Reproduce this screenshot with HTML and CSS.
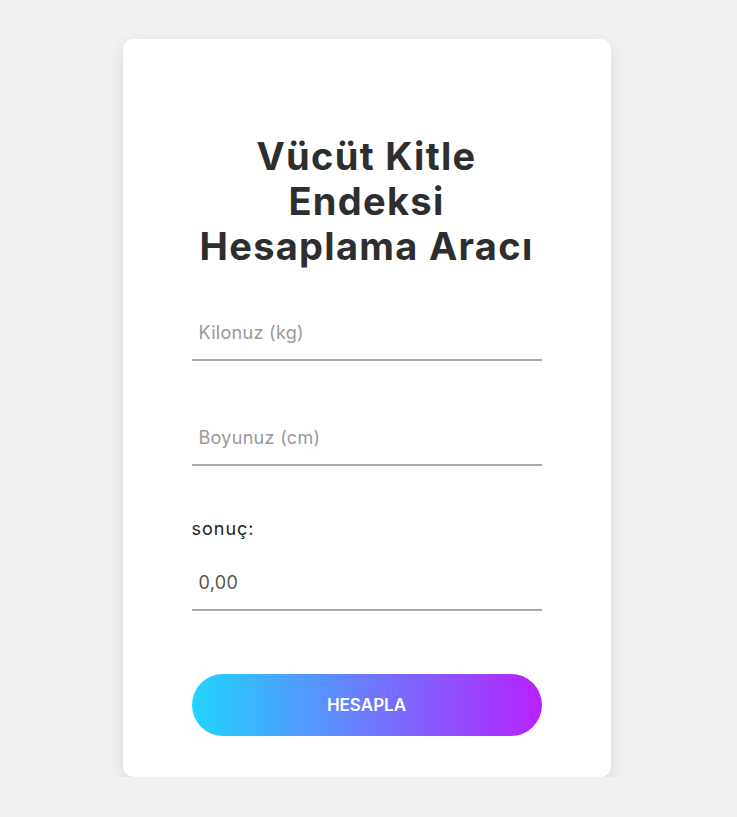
FILE: index.html
```html
<!DOCTYPE html>
<html lang="tr">
<head>
<meta charset="utf-8">
<title>Vücüt Kitle Endeksi Hesaplama Aracı</title>
<link rel="stylesheet" href="styles.css">
</head>
<body>
<main class="card">
  <h1 class="title">Vücüt Kitle<br>Endeksi<br>Hesaplama Aracı</h1>
  <input class="field field-first" type="text" placeholder="Kilonuz (kg)">
  <input class="field field-second" type="text" placeholder="Boyunuz (cm)">
  <label class="label">sonuç:</label>
  <input class="field field-result" type="text" value="0,00" readonly>
  <button class="button" type="button">HESAPLA</button>
</main>
</body>
</html>
```
FILE: styles.css
```css
html, body {
  margin: 0;
  padding: 0;
  background: #f1f1f1;
}
body {
  padding-top: 39px;
  font-family: "Inter", "Noto Sans", sans-serif;
}
.card {
  box-sizing: border-box;
  width: 488px;
  margin-left: calc(50% - 246px);
  background: #fff;
  border-radius: 10px;
  box-shadow: 0 5px 15px rgba(0, 0, 0, 0.1);
  padding: 95px 69px 41px;
  display: flex;
  flex-direction: column;
}
.title {
  margin: 0;
  font-size: 38px;
  line-height: 45px;
  font-weight: 700;
  letter-spacing: 1.3px;
  color: #2e2e2e;
  text-align: center;
}
.field {
  box-sizing: border-box;
  display: block;
  width: 100%;
  height: 51px;
  border: none;
  border-bottom: 2px solid #aaa;
  padding: 0 7px 5px;
  font-family: inherit;
  font-size: 18px;
  letter-spacing: 0.3px;
  color: #555;
  background: transparent;
  outline: none;
}
.field::placeholder {
  color: #999;
}
.field-first {
  margin-top: 41px;
}
.field-second {
  margin-top: 54px;
}
.label {
  margin-top: 49px;
  font-size: 18px;
  line-height: 27px;
  letter-spacing: 1px;
  color: #222;
}
.field-result {
  margin-top: 18px;
}
.button {
  margin-top: 63px;
  height: 62px;
  border: none;
  border-radius: 31px;
  background: linear-gradient(to right, #21d4fd, #b721ff);
  color: #fff;
  font-family: inherit;
  font-size: 17px;
  font-weight: 600;
  cursor: pointer;
}
```
